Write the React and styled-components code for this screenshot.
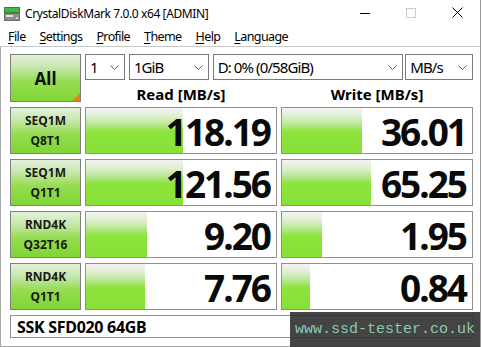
import styled, { createGlobalStyle } from 'styled-components'

const GlobalStyle = createGlobalStyle`
  html, body {
    margin: 0;
    padding: 0;
    background: #ffffff;
  }
  body {
    font-family: "Noto Sans", "Open Sans", sans-serif;
    color: #000000;
  }
`

const Window = styled.div`
  box-sizing: border-box;
  position: relative;
  width: 481px;
  height: 347px;
  display: flex;
  flex-direction: column;
  background: #ffffff;
  border-right: 1px solid #9a9a9a;
  overflow: hidden;
`

const TitleBar = styled.div`
  height: 27px;
  display: flex;
  align-items: center;
  padding-left: 4px;
`

const AppTitle = styled.span`
  margin-left: 5px;
  font-size: 12px;
  letter-spacing: -0.4px;
  color: #000000;
  white-space: nowrap;
`

const Controls = styled.div`
  margin-left: auto;
  display: flex;
  height: 100%;
`

const ControlButton = styled.div`
  width: 46px;
  height: 100%;
  display: flex;
  align-items: center;
  justify-content: center;
  margin-top: -1px;
`

const MenuBar = styled.div`
  height: 19px;
  display: flex;
  align-items: center;
  padding-left: 1px;
  border-bottom: 1px solid #c8c8c8;
`

const MenuItem = styled.span`
  padding: 0 7px;
  font-size: 12.5px;
  letter-spacing: -0.6px;
  white-space: nowrap;

  u {
    text-decoration: underline;
    text-underline-offset: 2px;
  }
`

const Main = styled.div`
  flex: 1;
  box-sizing: border-box;
  border-left: 1px solid #a8a8a8;
  border-bottom: 1px solid #a8a8a8;
  padding: 7px 0 0 9px;
`

const Board = styled.div`
  display: grid;
  grid-template-columns: 71px 192px 192px;
  grid-template-rows: 48px repeat(4, 47px) 23px;
  column-gap: 4px;
  row-gap: 5px;
`

const greenFace = `
  linear-gradient(
    #e4f1dc 0%,
    #c3e6a6 30%,
    #94dc50 58%,
    #80d634 100%
  )
`

const AllButton = styled.div`
  position: relative;
  box-sizing: border-box;
  border: 1px solid #7f7f7f;
  background: ${greenFace};
  display: flex;
  align-items: center;
  justify-content: center;
  font-size: 17px;
  font-weight: 700;
  color: #111111;
  overflow: hidden;

  &::after {
    content: '';
    position: absolute;
    right: 0;
    bottom: 0;
    border-style: solid;
    border-width: 0 0 8px 8px;
    border-color: transparent transparent #e57d22 transparent;
  }
`

const TopRight = styled.div`
  grid-column: 2 / 4;
  display: flex;
  flex-direction: column;
`

const ComboRow = styled.div`
  height: 26px;
  display: flex;
  gap: 4px;
`

const Combo = styled.div`
  box-sizing: border-box;
  width: ${(p) => p.$w}px;
  margin-right: ${(p) => p.$mr || 0}px;
  height: 26px;
  border: 1px solid #7a7a7a;
  background: #ffffff;
  display: flex;
  align-items: center;
  padding: 0 5px 0 4px;
  font-size: 15px;
  letter-spacing: -0.9px;
  white-space: nowrap;

  span {
    flex: 1;
  }
`

const Headers = styled.div`
  flex: 1;
  display: grid;
  grid-template-columns: 192px 192px;
  column-gap: 4px;
  align-items: center;
`

const HeaderText = styled.div`
  text-align: center;
  font-size: 15px;
  font-weight: 700;
  padding-top: 4px;
`

const TestLabel = styled.div`
  box-sizing: border-box;
  border: 1px solid #808080;
  background: ${greenFace};
  display: flex;
  flex-direction: column;
  align-items: center;
  justify-content: center;
  font-size: 12px;
  font-weight: 700;
  line-height: 20px;
  color: #1a1a1a;
`

const ValueCell = styled.div`
  position: relative;
  box-sizing: border-box;
  border: 1px solid #909090;
  background: #ffffff;
  display: flex;
  align-items: center;
  justify-content: flex-end;
  padding-right: 6px;
`

const Bar = styled.div`
  position: absolute;
  left: 0;
  top: 0;
  bottom: 0;
  background: linear-gradient(
    #f4f4f4 0%,
    #dcefcc 20%,
    #b4e68a 38%,
    #8ee43e 52%,
    #86e036 100%
  );
`

const Value = styled.span`
  position: relative;
  font-size: 37px;
  font-weight: 700;
  letter-spacing: -2px;
  line-height: 44px;
  color: #0a0a0a;
  margin-top: 2px;
`

const Footer = styled.div`
  grid-column: 1 / 4;
  box-sizing: border-box;
  border: 1px solid #909090;
  display: flex;
  align-items: center;
  padding-left: 6px;
  font-size: 16px;
  font-weight: 700;
  letter-spacing: -0.3px;
`

const Watermark = styled.div`
  position: absolute;
  right: 0;
  bottom: 0;
  width: 190px;
  height: 35px;
  box-sizing: border-box;
  background: rgba(48, 48, 48, 0.9);
  display: flex;
  align-items: center;
  padding-left: 5px;
  font-family: "Liberation Mono", "DejaVu Sans Mono", monospace;
  font-size: 15px;
  color: #8cc9b0;
  white-space: nowrap;
`

const Chevron = () => (
  <svg width="9" height="5" viewBox="0 0 9 5">
    <path d="M0.5 0.5 L4.5 4.5 L8.5 0.5" fill="none" stroke="#606060" strokeWidth="1" />
  </svg>
)

const AppIcon = () => (
  <svg width="16" height="16" viewBox="0 0 16 16">
    <rect x="0.5" y="1.5" width="15" height="5" fill="#4bb34b" stroke="#2f8a2f" />
    <rect x="0.5" y="7.5" width="15" height="7" fill="#8d8d8d" stroke="#6e6e6e" />
    <rect x="2" y="9" width="7" height="2" fill="#e6e6e6" />
    <rect x="12" y="11" width="2" height="2" fill="#cfcfcf" />
  </svg>
)

const rows = [
  { name: ['SEQ1M', 'Q8T1'], read: '118.19', readW: 97, write: '36.01', writeW: 80 },
  { name: ['SEQ1M', 'Q1T1'], read: '121.56', readW: 97, write: '65.25', writeW: 89 },
  { name: ['RND4K', 'Q32T16'], read: '9.20', readW: 61, write: '1.95', writeW: 40 },
  { name: ['RND4K', 'Q1T1'], read: '7.76', readW: 59, write: '0.84', writeW: 28 },
]

const menus = [
  ['F', 'ile'],
  ['S', 'ettings'],
  ['P', 'rofile'],
  ['T', 'heme'],
  ['H', 'elp'],
  ['L', 'anguage'],
]

export default function App() {
  return (
    <>
      <GlobalStyle />
      <Window>
        <TitleBar>
          <AppIcon />
          <AppTitle>CrystalDiskMark 7.0.0 x64 [ADMIN]</AppTitle>
          <Controls>
            <ControlButton>
              <svg width="10" height="10" viewBox="0 0 10 10">
                <path d="M0 5.5 H10" stroke="#000" strokeWidth="1" />
              </svg>
            </ControlButton>
            <ControlButton>
              <svg width="10" height="10" viewBox="0 0 10 10">
                <rect x="0.5" y="0.5" width="9" height="9" fill="none" stroke="#cccccc" />
              </svg>
            </ControlButton>
            <ControlButton>
              <svg width="11" height="11" viewBox="0 0 11 11">
                <path d="M0.5 0.5 L10.5 10.5 M10.5 0.5 L0.5 10.5" stroke="#000" strokeWidth="1" />
              </svg>
            </ControlButton>
          </Controls>
        </TitleBar>

        <MenuBar>
          {menus.map(([k, rest]) => (
            <MenuItem key={k}>
              <u>{k}</u>
              {rest}
            </MenuItem>
          ))}
        </MenuBar>

        <Main>
          <Board>
            <AllButton>All</AllButton>
            <TopRight>
              <ComboRow>
                <Combo $w={40}>
                  <span>1</span>
                  <Chevron />
                </Combo>
                <Combo $w={80}>
                  <span>1GiB</span>
                  <Chevron />
                </Combo>
                <Combo $w={191} $mr={-2}>
                  <span>D: 0% (0/58GiB)</span>
                  <Chevron />
                </Combo>
                <Combo $w={68}>
                  <span>MB/s</span>
                  <Chevron />
                </Combo>
              </ComboRow>
              <Headers>
                <HeaderText>Read [MB/s]</HeaderText>
                <HeaderText>Write [MB/s]</HeaderText>
              </Headers>
            </TopRight>

            {rows.map((r) => [
              <TestLabel key={r.name.join('-') + '-l'}>
                <span>{r.name[0]}</span>
                <span>{r.name[1]}</span>
              </TestLabel>,
              <ValueCell key={r.name.join('-') + '-r'}>
                <Bar style={{ width: r.readW }} />
                <Value>{r.read}</Value>
              </ValueCell>,
              <ValueCell key={r.name.join('-') + '-w'}>
                <Bar style={{ width: r.writeW }} />
                <Value>{r.write}</Value>
              </ValueCell>,
            ])}

            <Footer>SSK SFD020 64GB</Footer>
          </Board>
        </Main>

        <Watermark>www.ssd-tester.co.uk</Watermark>
      </Window>
    </>
  )
}
